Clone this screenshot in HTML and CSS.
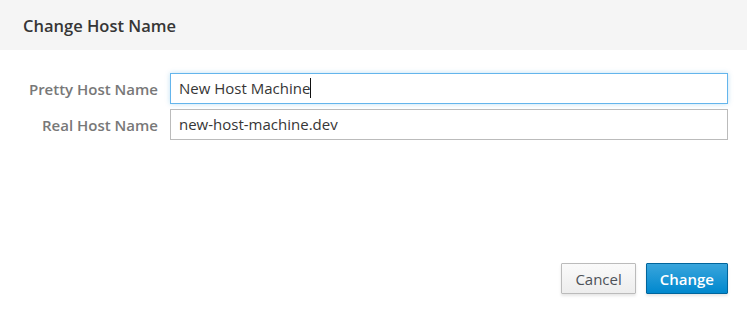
FILE: index.html
```html
<!DOCTYPE html>
<html>
<head>
  <title>Change Host Name</title>
  <link rel="stylesheet" href="styles.css">
</head>
<body>
  <div class="modal">
    <div class="modal-header">
      <h4 class="modal-title">Change Host Name</h4>
    </div>
    <div class="modal-body">
      <div class="form-row">
        <label class="control-label">Pretty Host Name</label>
        <div class="form-control focus">New Host Machine<span class="caret"></span></div>
      </div>
      <div class="form-row">
        <label class="control-label">Real Host Name</label>
        <div class="form-control">new-host-machine.dev</div>
      </div>
    </div>
    <div class="modal-footer">
      <button class="btn btn-default">Cancel</button>
      <button class="btn btn-primary">Change</button>
    </div>
  </div>
</body>
</html>
```

FILE: styles.css
```css
html, body {
  margin: 0;
  height: 100%;
}
body {
  font-family: "Open Sans", "Liberation Sans", sans-serif;
  background: white;
  color: #363636;
}
.modal {
  display: flex;
  flex-direction: column;
  height: 100%;
}
.modal-header {
  background: #f5f5f5;
  height: 50px;
  display: flex;
  align-items: center;
  padding-left: 23px;
}
.modal-title {
  margin: 0;
  font-size: 16.5px;
  font-weight: 600;
  color: #363636;
}
.modal-body {
  flex: 1;
  padding: 23px 19px 0 0;
  display: flex;
  flex-direction: column;
  gap: 5px;
}
.form-row {
  display: flex;
  align-items: center;
}
.control-label {
  width: 158px;
  padding-right: 12px;
  text-align: right;
  font-size: 15px;
  font-weight: 600;
  color: #787878;
}
.form-control {
  flex: 1;
  height: 29px;
  line-height: 29px;
  padding: 0 8px;
  border: 1px solid #bbb;
  font-size: 15px;
  color: #363636;
  background: white;
}
.form-control.focus {
  border-color: #64b5ec;
  box-shadow: 0 0 5px rgba(0, 136, 206, 0.25);
}
.caret {
  display: inline-block;
  width: 1px;
  height: 20px;
  background: #111;
  vertical-align: middle;
  margin-top: -3px;
}
.modal-footer {
  display: flex;
  justify-content: flex-end;
  gap: 10px;
  padding: 0 19px 19px 0;
}
.btn {
  font-family: inherit;
  font-size: 15px;
  height: 31px;
  padding: 0 13px;
  border-radius: 1px;
  box-shadow: 0 2px 3px rgba(3, 3, 3, 0.1);
}
.btn-default {
  background: linear-gradient(#fafafa, #ededed);
  border: 1px solid #bbb;
  color: #4d5258;
}
.btn-primary {
  background: linear-gradient(#39a5dc, #0088ce);
  border: 1px solid #00659c;
  color: white;
  font-weight: 600;
}
```
